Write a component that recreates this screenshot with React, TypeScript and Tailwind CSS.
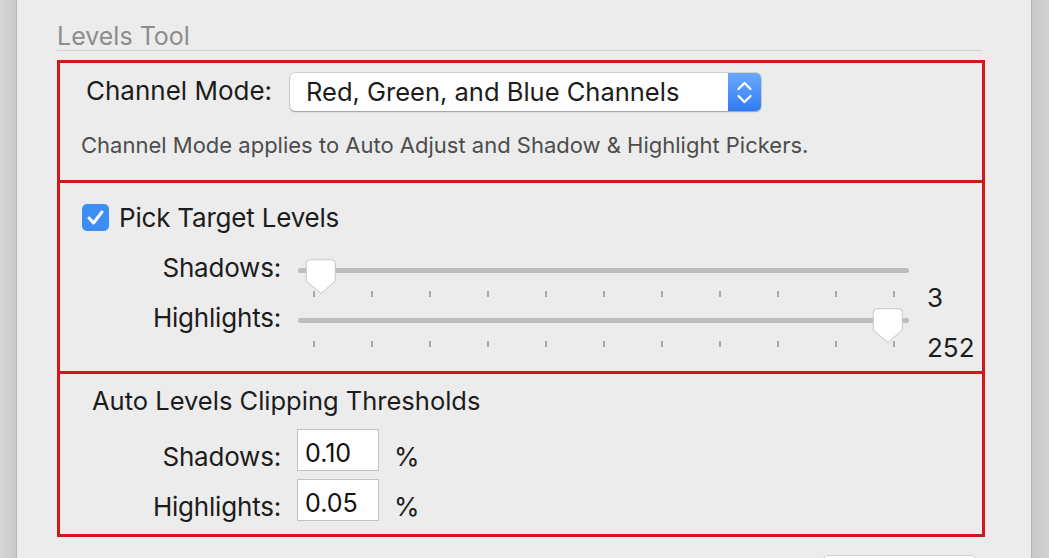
import React from "react";

const F = { fontFamily: "Inter, 'Noto Sans', 'Liberation Sans', sans-serif" };

function Thumb() {
  return (
    <svg width="32" height="36" viewBox="0 0 32 36">
      <path
        d="M4.5 0.75 H26.5 A3.75 3.75 0 0 1 30.25 4.5 V22 L16 34.5 L1.25 22 V4.5 A3.75 3.75 0 0 1 4.5 0.75 Z"
        fill="#ffffff"
        stroke="#c6c6c6"
        strokeWidth="1"
      />
    </svg>
  );
}

function Ticks() {
  return (
    <div className="w-[611px] h-[6px] mt-[6px]">
      <div className="ml-[15px] w-[582px] h-[6px] flex justify-between">
        {Array.from({ length: 11 }).map((_, i) => (
          <div key={i} className="w-[2px] h-[6px] bg-[#a9a9a9]" />
        ))}
      </div>
    </div>
  );
}

function SliderRow({
  label,
  value,
  thumbLeft,
  thumbTop,
}: {
  label: string;
  value: string;
  thumbLeft: number;
  thumbTop: number;
}) {
  return (
    <div>
      <div className="flex h-[30px] items-start">
        <div className="w-[221px] text-right text-[26px] leading-[26px] tracking-[-0.2px] text-[#1c1c1c]">{label}</div>
        <div className="ml-[17px] w-[611px] h-[30px] flex items-center relative">
          <div className="w-full h-[5px] rounded-full bg-[#bdbdbd]" />
          <div className="absolute" style={{ left: thumbLeft, top: thumbTop }}>
            <Thumb />
          </div>
        </div>
      </div>
      <div className="flex h-[20px] items-start">
        <div className="w-[238px]" />
        <Ticks />
        <div className="ml-[18px] text-[26px] leading-[26px] text-[#1c1c1c]">{value}</div>
      </div>
    </div>
  );
}

function InputRow({ label, value, first }: { label: string; value: string; first?: boolean }) {
  return (
    <div className={`flex items-start h-[42px] ${first ? "" : "mt-[8px]"}`}>
      <div className="w-[221px] text-right text-[26px] leading-[26px] tracking-[-0.2px] pt-[15px] text-[#1c1c1c]">{label}</div>
      <div className="ml-[16px] w-[82px] h-[42px] bg-white border border-[#c2c2c2] pl-[7px] pt-[10px] text-[25px] leading-[26px] text-[#111]">
        {value}
      </div>
      <div className="ml-[15px] pt-[15px] text-[26px] leading-[26px] text-[#1c1c1c]">%</div>
    </div>
  );
}

export default function App() {
  return (
    <div className="w-[1049px] h-[558px] overflow-hidden flex bg-[#ececec]" style={F}>
      <div className="w-[17px] h-full bg-gradient-to-r from-[#d6d6d6] to-[#c9c9c9] border-r border-[#b8b8b8]" />
      <div className="flex-1 pl-[40px] pr-[44px] pt-[23px]">
        <div className="w-[925px] h-[28px] text-[25px] leading-[27px] text-[#8d8d8d] border-b border-[#d2d2d2]">Levels Tool</div>
        <div className="mt-[9px] border-[3px] border-[#d01a1a] w-[928px]">
          {/* Section 1 */}
          <div className="h-[117px] pt-[10px]">
            <div className="flex items-center h-[38px]">
              <div className="pl-[26px] w-[230px] text-[26px] leading-[26px] -mt-[2px] text-[#1c1c1c]">Channel Mode:</div>
              <div className="w-[471px] h-[38px] rounded-[5px] bg-white flex shadow-[0_0_0_0.5px_rgba(0,0,0,0.22),0_1px_1.5px_rgba(0,0,0,0.25)]">
                <div className="flex-1 pl-[16px] text-[25.5px] leading-[38px] text-[#1c1c1c]">Red, Green, and Blue Channels</div>
                <div className="w-[33px] h-[38px] rounded-r-[5px] bg-gradient-to-b from-[#6aa9fc] to-[#2f7cf4] flex items-center justify-center">
                  <svg width="33" height="38" viewBox="0 0 33 38">
                    <path d="M10.5 16 L16.5 10 L22.5 16" fill="none" stroke="#fff" strokeWidth="2.2" strokeLinecap="round" strokeLinejoin="round" />
                    <path d="M10.5 23 L16.5 29 L22.5 23" fill="none" stroke="#fff" strokeWidth="2.2" strokeLinecap="round" strokeLinejoin="round" />
                  </svg>
                </div>
              </div>
            </div>
            <div className="pl-[21px] mt-[21px] text-[22px] leading-[26px] text-[#4d4d4d]">
              Channel Mode applies to Auto Adjust and Shadow &amp; Highlight Pickers.
            </div>
          </div>
          {/* Section 2 */}
          <div className="h-[191px] border-t-[3px] border-[#d01a1a] pt-[21px]">
            <div className="flex items-center h-[27px] pl-[22px]">
              <div className="w-[27px] h-[27px] rounded-[5px] bg-[#3d8ef4] flex items-center justify-center">
                <svg width="27" height="27" viewBox="0 0 27 27">
                  <path d="M7 14 L11.5 19 L20 8" fill="none" stroke="#fff" strokeWidth="3" strokeLinecap="round" strokeLinejoin="round" />
                </svg>
              </div>
              <div className="ml-[10px] text-[26px] leading-[27px] tracking-[-0.2px] text-[#1c1c1c]">Pick Target Levels</div>
            </div>
            <div className="mt-[24px]">
              <SliderRow label="Shadows:" value="3" thumbLeft={7} thumbTop={4} />
              <SliderRow label="Highlights:" value="252" thumbLeft={574} thumbTop={3} />
            </div>
          </div>
          {/* Section 3 */}
          <div className="h-[163px] border-t-[3px] border-[#d01a1a] pt-[13px]">
            <div className="pl-[32px] text-[25.5px] leading-[28px] text-[#1c1c1c]">Auto Levels Clipping Thresholds</div>
            <div className="mt-[14px]">
              <InputRow label="Shadows:" value="0.10" first />
              <InputRow label="Highlights:" value="0.05" />
            </div>
          </div>
        </div>
        <div className="flex justify-end pr-[11px] mt-[18px]">
          <div className="w-[153px] h-[10px] rounded-t-[5px] bg-white border border-[#cfcfcf]" />
        </div>
      </div>
      <div className="w-[18px] h-full bg-gradient-to-r from-[#c8c8c8] to-[#d2d2d2] border-l border-[#b4b4b4]" />
    </div>
  );
}
